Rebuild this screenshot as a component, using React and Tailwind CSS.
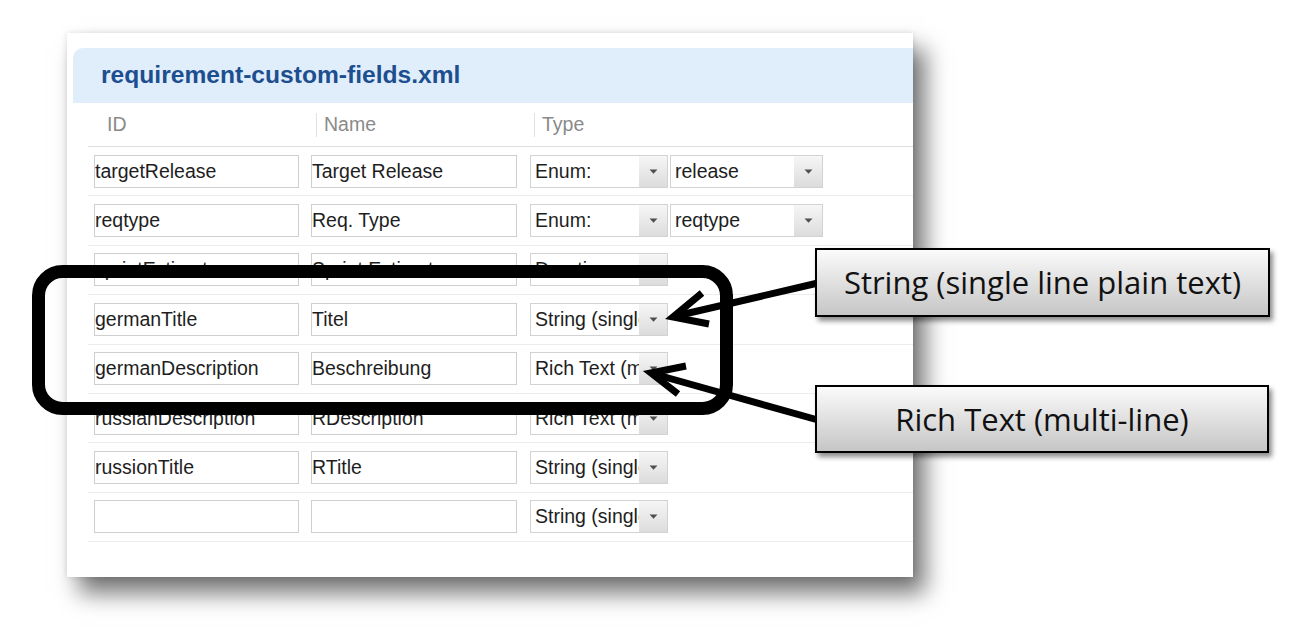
import React from "react";

const rows = [
  { id: "targetRelease", name: "Target Release", type: "Enum:", extra: "release" },
  { id: "reqtype", name: "Req. Type", type: "Enum:", extra: "reqtype" },
  { id: "sprintEstimate", name: "Sprint Estimate", type: "Duration" },
  { id: "germanTitle", name: "Titel", type: "String (single line)" },
  { id: "germanDescription", name: "Beschreibung", type: "Rich Text (multi-line)" },
  { id: "russianDescription", name: "RDescription", type: "Rich Text (multi-line)" },
  { id: "russionTitle", name: "RTitle", type: "String (single line)" },
  { id: "", name: "", type: "String (single line)" },
];

function Caret() {
  return (
    <svg width="9" height="5" viewBox="0 0 9 5">
      <path d="M0.5 0.5 L8.5 0.5 L4.5 4.8 Z" fill="#4e4e4e" />
    </svg>
  );
}

function Select({ text, width }) {
  return (
    <div
      className="flex h-[33px] border border-[#d2d2d2] bg-white"
      style={{ width }}
    >
      <div className="flex min-w-0 flex-1 items-center overflow-hidden whitespace-nowrap pl-[4px] text-[#1e1e1e]">
        {text}
      </div>
      <div className="flex w-[28px] shrink-0 items-center justify-center bg-linear-to-b from-[#f6f6f6] to-[#dcdcdc]">
        <Caret />
      </div>
    </div>
  );
}

function Input({ text, width }) {
  return (
    <div
      className="flex h-[33px] items-center overflow-hidden whitespace-nowrap border border-[#cfcfcf] bg-white text-[#1e1e1e]"
      style={{ width }}
    >
      {text}
    </div>
  );
}

export default function App() {
  return (
    <div
      className="relative h-[639px] w-[1312px] overflow-hidden bg-white"
      style={{ fontFamily: '"Liberation Sans", Arial, sans-serif' }}
    >
      <div className="pt-[33px] pl-[67px]">
        <div className="h-[544px] w-[846px] bg-white pt-[15px] pl-[6px] shadow-[0_0_6px_rgba(0,0,0,0.12),12px_16px_22px_rgba(0,0,0,0.55)]">
          <div className="flex h-[55px] items-center rounded-tl-[10px] bg-[#e0eefb] pl-[28px]">
            <span className="text-[24.6px] font-bold text-[#1d4e8f]">
              requirement-custom-fields.xml
            </span>
          </div>
          <div className="ml-[15px] text-[19.5px]">
            <div className="flex h-[44px] items-center border-b border-[#dedede] text-[#8a8a8a]">
              <div className="w-[228px] pl-[19px]">ID</div>
              <div className="flex w-[218px] items-center">
                <div className="h-[24px] w-px bg-[#e2e2e2]" />
                <span className="pl-[7px]">Name</span>
              </div>
              <div className="flex items-center">
                <div className="h-[24px] w-px bg-[#e2e2e2]" />
                <span className="pl-[7px]">Type</span>
              </div>
            </div>
            {rows.map((r, i) => (
              <div
                key={i}
                className="flex h-[49.4px] items-center border-b border-[#ececec] pl-[6px]"
              >
                <Input text={r.id} width={205} />
                <div className="w-[12px]" />
                <Input text={r.name} width={206} />
                <div className="w-[13px]" />
                <Select text={r.type} width={138} />
                {r.extra && (
                  <>
                    <div className="w-[2px]" />
                    <Select text={r.extra} width={153} />
                  </>
                )}
              </div>
            ))}
          </div>
        </div>
      </div>

      <svg
        className="absolute left-0 top-0"
        width="1312"
        height="639"
        viewBox="0 0 1312 639"
      >
        <rect
          x="38.5"
          y="271.5"
          width="688"
          height="137"
          rx="24"
          fill="none"
          stroke="#000"
          strokeWidth="13"
        />
        <line x1="818" y1="283" x2="676" y2="316" stroke="#000" strokeWidth="7" />
        <polyline
          points="702,293 673,317 709,324"
          fill="none"
          stroke="#000"
          strokeWidth="7"
        />
        <line x1="818" y1="420" x2="654" y2="374" stroke="#000" strokeWidth="7" />
        <polyline
          points="686,366 651,373 678,394"
          fill="none"
          stroke="#000"
          strokeWidth="7"
        />
      </svg>

      <div
        className="absolute left-[815px] top-[248px] flex h-[69px] w-[455px] items-center justify-center border-2 border-black bg-linear-to-b from-[#fbfbfb] to-[#c6c6c6] text-[31px] text-[#111] shadow-[3px_4px_5px_rgba(0,0,0,0.45)]"
        style={{ fontFamily: '"Open Sans", sans-serif' }}
      >
        String (single line plain text)
      </div>
      <div
        className="absolute left-[815px] top-[385px] flex h-[68px] w-[454px] items-center justify-center border-2 border-black bg-linear-to-b from-[#fbfbfb] to-[#c6c6c6] text-[31px] text-[#111] shadow-[3px_4px_5px_rgba(0,0,0,0.45)]"
        style={{ fontFamily: '"Open Sans", sans-serif' }}
      >
        Rich Text (multi-line)
      </div>
    </div>
  );
}
